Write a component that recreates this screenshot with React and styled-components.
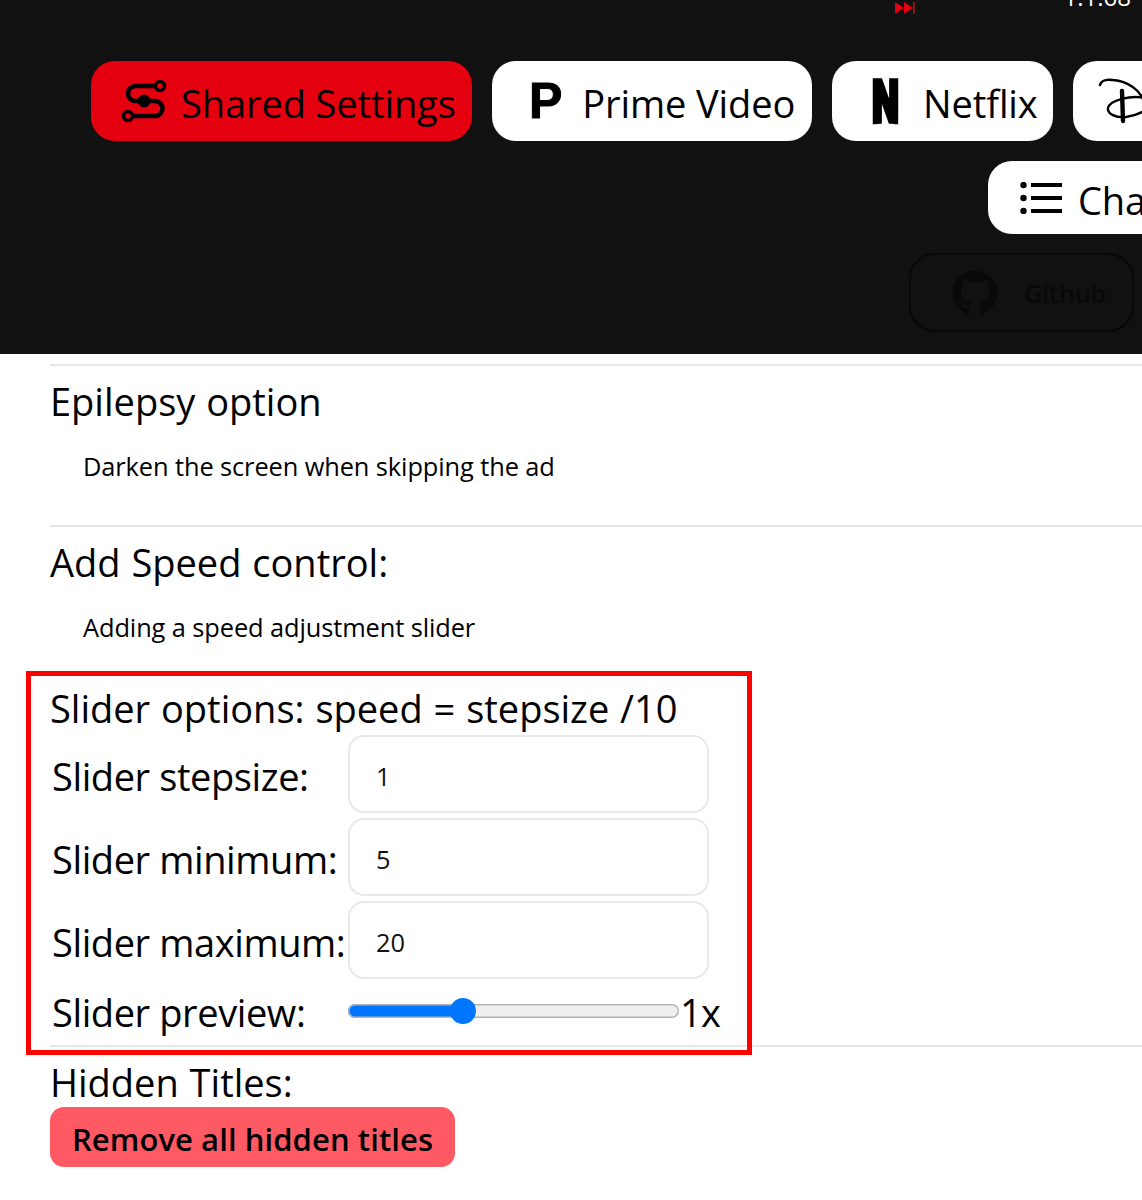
import React from "react";
import styled, { createGlobalStyle } from "styled-components";
import { FaGithub } from "react-icons/fa";
import { RiNetflixFill } from "react-icons/ri";

const GlobalStyle = createGlobalStyle`
  body {
    margin: 0;
    background: #fff;
    color: #000;
    font-family: "Open Sans", "Noto Sans", "Liberation Sans", sans-serif;
    overflow-x: hidden;
  }
`;

const Page = styled.div`
  position: relative;
  width: 1142px;
  height: 1200px;
  overflow: hidden;
`;

const Header = styled.header`
  height: 354px;
  background: #111;
  overflow: hidden;
`;

const TopBar = styled.div`
  display: flex;
  justify-content: flex-end;
  align-items: flex-start;
  height: 61px;
  padding-right: 11px;
`;

const SkipIcon = styled.svg`
  width: 20px;
  height: 12px;
  margin: 2px 149px 0 0;
  fill: #e5000f;
`;

const Version = styled.span`
  margin-top: -22px;
  font-size: 24px;
  line-height: 37px;
  color: #fff;
`;

const TabRow = styled.div`
  display: flex;
  gap: 20px;
  padding-left: 91px;
  width: 1400px;
`;

const Tab = styled.button`
  display: flex;
  flex: none;
  align-items: center;
  box-sizing: border-box;
  width: ${(p) => p.$width}px;
  height: ${(p) => p.$height || 80}px;
  padding: 0 0 0 ${(p) => p.$pad || 30}px;
  gap: ${(p) => p.$gap || 23}px;
  border: 0;
  border-radius: 24px;
  background: ${(p) => (p.$active ? "#e5000f" : "#fff")};
  color: #000;
  font-family: inherit;
  font-size: 38px;
  letter-spacing: -0.1px;
  white-space: nowrap;
  & > svg {
    flex: none;
  }
`;

const TabLabel = styled.span`
  padding-top: 4px;
`;

const SecondRow = styled.div`
  display: flex;
  padding: 20px 0 0 988px;
  width: 1400px;
`;

const LetterLogo = styled.span`
  font-family: "Liberation Sans", sans-serif;
  font-size: 50px;
  font-weight: 700;
  -webkit-text-stroke: 1px #000;
  line-height: 1;
`;

const SharedGlyph = styled.svg`
  width: 48px;
  height: 48px;
  margin-top: -2px;
`;

const GithubRow = styled.div`
  display: flex;
  padding: 19px 0 0 909px;
`;

const GithubLink = styled.a`
  display: flex;
  align-items: center;
  gap: 26px;
  width: 225px;
  height: 79px;
  box-sizing: border-box;
  padding-left: 41px;
  border: 2px solid #080808;
  border-radius: 26px;
  color: #090909;
  font-size: 25px;
  font-weight: 600;
`;

const Content = styled.main`
  padding: 10px 0 0 50px;
`;

const Rule = styled.hr`
  margin: 0;
  border: 0;
  border-top: 2px solid #e5e7ea;
`;

const OptionTitle = styled.div`
  margin-top: ${(p) => p.$top || 0}px;
  font-size: 38px;
  line-height: 52px;
  word-spacing: 1px;
`;

const OptionText = styled.div`
  box-sizing: border-box;
  padding: 21px 0 0 33px;
  height: ${(p) => p.$height || 70}px;
  font-size: 25.4px;
  line-height: 36px;
  letter-spacing: -0.1px;
`;

const SliderGrid = styled.div`
  display: grid;
  grid-template-columns: 296px 361px;
  grid-auto-rows: 78px;
  row-gap: 5px;
  padding: 1px 0 0 2px;
`;

const SliderLabel = styled.label`
  align-self: center;
  padding-top: 3px;
  font-size: 38px;
  line-height: 52px;
  letter-spacing: -0.4px;
  white-space: nowrap;
`;

const NumberInput = styled.input`
  box-sizing: border-box;
  width: 361px;
  height: 78px;
  padding: 3px 26px 0;
  border: 2px solid #e6e8ea;
  border-radius: 16px;
  background: #fff;
  color: #111;
  font-family: inherit;
  font-size: 25.4px;
  outline: none;
`;

const PreviewRow = styled.div`
  display: flex;
  align-items: center;
  height: 66px;
  padding-left: 2px;
`;

const PreviewLabel = styled(SliderLabel)`
  width: 296px;
  padding-top: 0;
`;

const RangeInput = styled.input`
  appearance: none;
  width: 331px;
  height: 26px;
  margin: -2px 1px 0 0;
  background: transparent;
  &::-webkit-slider-runnable-track {
    height: 14px;
    border-radius: 7px;
    box-shadow: inset 0 0 0 1.5px #b4b4b4;
    background: linear-gradient(to right, #0075ff 34%, #efefef 34%);
  }
  &::-webkit-slider-thumb {
    appearance: none;
    width: 26px;
    height: 26px;
    margin-top: -6px;
    border-radius: 50%;
    background: #0075ff;
  }
`;

const SpeedValue = styled.span`
  font-size: 38px;
  letter-spacing: -0.8px;
`;

const RemoveButton = styled.button`
  display: block;
  height: 60px;
  width: 405px;
  margin-top: -1px;
  padding: 4px 0 0;
  border: 0;
  border-radius: 14px;
  background: #ff5a64;
  color: #000;
  font-family: inherit;
  font-size: 31px;
  font-weight: 600;
  letter-spacing: 0.08px;
`;

const Highlight = styled.div`
  position: absolute;
  left: 26px;
  top: 671px;
  width: 726px;
  height: 384px;
  box-sizing: border-box;
  border: 5px solid #ff0000;
  pointer-events: none;
`;

const SharedIcon = () => (
  <SharedGlyph viewBox="0 0 48 48" fill="none" stroke="#000" strokeWidth="4.5">
    <path d="M34 10H14.5a7.5 7.5 0 0 0 0 15H34a7.5 7.5 0 0 1 0 15H12" />
    <circle cx="39" cy="10" r="4.5" strokeWidth="3.5" />
    <circle cx="7" cy="40" r="4.5" strokeWidth="3.5" />
    <circle cx="23" cy="25" r="6.5" fill="#000" stroke="none" />
  </SharedGlyph>
);

const DisneyIcon = () => (
  <svg width="60" height="50" viewBox="0 0 60 50" fill="none" stroke="#000" strokeWidth="2.4" strokeLinecap="round">
    <path d="M2 9C3 5 8 3 15 4C28 5 44 13 47 30" />
    <path d="M48 22C32 19 12 24 10 32C9 38 18 42 28 41C36 40 43 37 48 34" />
    <path d="M24 15L25 45" strokeWidth="4.4" />
  </svg>
);

const ListIcon = () => (
  <svg width="42" height="32" viewBox="0 0 42 32" fill="#000">
    <circle cx="3.5" cy="3" r="3.2" />
    <circle cx="3.5" cy="16" r="3.2" />
    <circle cx="3.5" cy="29" r="3.2" />
    <rect x="11" y="1" width="31" height="4" />
    <rect x="11" y="14" width="31" height="4" />
    <rect x="11" y="27" width="31" height="4" />
  </svg>
);

export default function App() {
  return (
    <Page>
      <GlobalStyle />
      <Header>
        <TopBar>
          <SkipIcon viewBox="0 0 20 12">
            <path d="M0 0l9 6-9 6zM9 0l9 6-9 6zM18 0h1.5v12H18z" />
          </SkipIcon>
          <Version>1.1.68</Version>
        </TopBar>
        <TabRow>
          <Tab $active $width={381} $pad={30} $gap={12}>
            <SharedIcon />
            <TabLabel>Shared Settings</TabLabel>
          </Tab>
          <Tab $width={320} $pad={37} $gap={20}>
            <LetterLogo>P</LetterLogo>
            <TabLabel>Prime Video</TabLabel>
          </Tab>
          <Tab $width={221} $pad={28} $gap={12}>
            <RiNetflixFill size={51} />
            <TabLabel>Netflix</TabLabel>
          </Tab>
          <Tab $width={240} $pad={25} $gap={20}>
            <DisneyIcon />
            <TabLabel>Disney+</TabLabel>
          </Tab>
        </TabRow>
        <SecondRow>
          <Tab $height={73} $width={290} $pad={32} $gap={16}>
            <ListIcon />
            <TabLabel>Changelog</TabLabel>
          </Tab>
        </SecondRow>
        <GithubRow>
          <GithubLink>
            <FaGithub size={46} color="#090909" />
            Github
          </GithubLink>
        </GithubRow>
      </Header>
      <Content>
        <Rule />
        <OptionTitle $top={9}>Epilepsy option</OptionTitle>
        <OptionText $height={98}>Darken the screen when skipping the ad</OptionText>
        <Rule />
        <OptionTitle $top={9}>Add Speed control:</OptionTitle>
        <OptionText $height={94}>Adding a speed adjustment slider</OptionText>
        <OptionTitle>Slider options: speed = stepsize /10</OptionTitle>
        <SliderGrid>
          <SliderLabel>Slider stepsize:</SliderLabel>
          <NumberInput type="text" defaultValue="1" />
          <SliderLabel>Slider minimum:</SliderLabel>
          <NumberInput type="text" defaultValue="5" />
          <SliderLabel>Slider maximum:</SliderLabel>
          <NumberInput type="text" defaultValue="20" />
        </SliderGrid>
        <PreviewRow>
          <PreviewLabel>Slider preview:</PreviewLabel>
          <RangeInput type="range" min="5" max="20" defaultValue="10" />
          <SpeedValue>1x</SpeedValue>
        </PreviewRow>
        <Rule />
        <OptionTitle $top={9}>Hidden Titles:</OptionTitle>
        <RemoveButton>Remove all hidden titles</RemoveButton>
      </Content>
      <Highlight />
    </Page>
  );
}
